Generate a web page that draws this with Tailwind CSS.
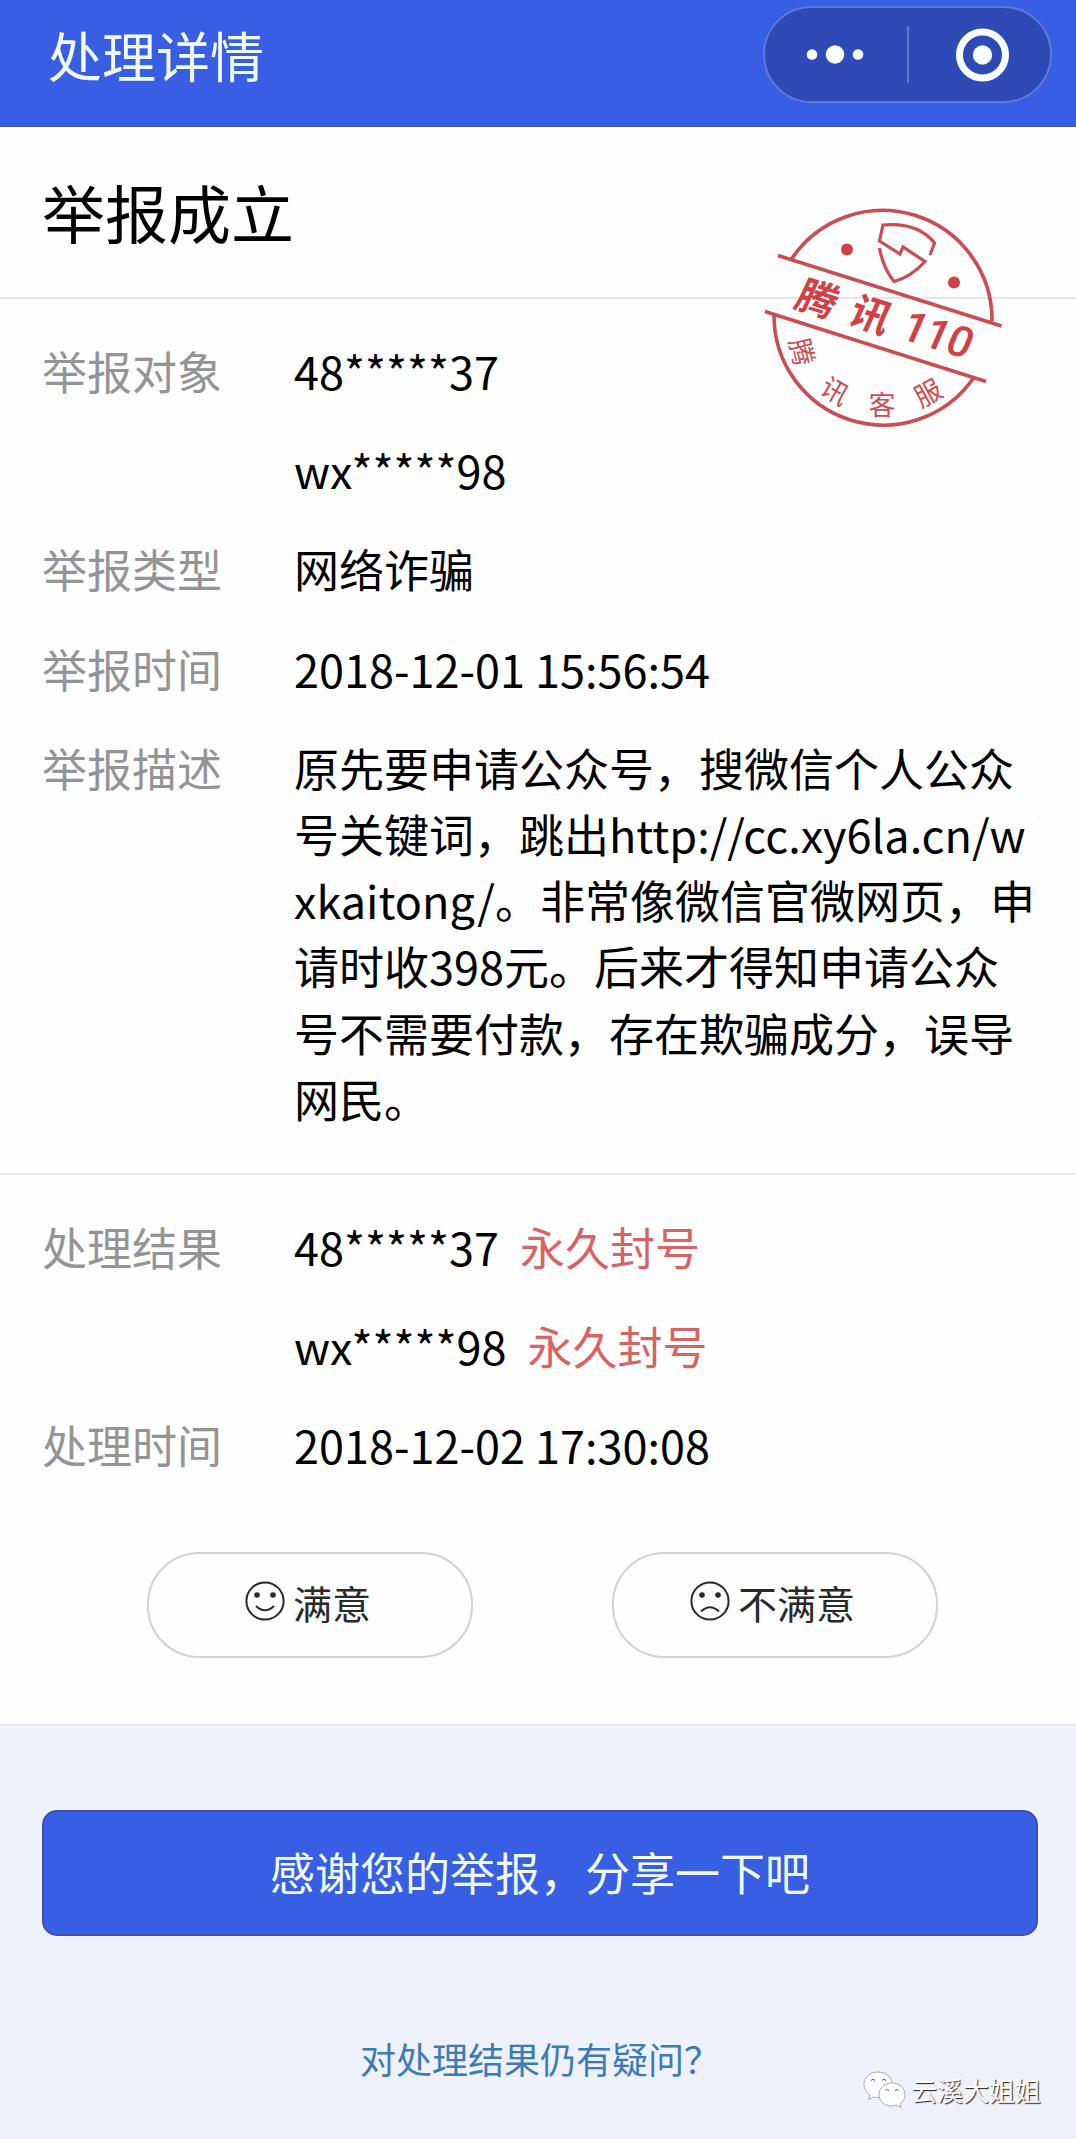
<!DOCTYPE html>
<html lang="zh-CN">
<head>
    <meta charset="UTF-8">
    <meta name="viewport" content="width=device-width, initial-scale=1.0">
    <title>处理详情</title>
    <script src="https://cdn.jsdelivr.net/npm/@tailwindcss/browser@4"></script>
    <style>
        body {
            font-family: 'Noto Sans CJK SC', sans-serif;
        }
    </style>
</head>
<body class="w-[1076px] h-[2139px] bg-[#eef0fa] overflow-hidden">
    <!-- Nav bar -->
    <header class="h-[127px] bg-[#385ee3] border-b border-[#4657b0] flex items-start justify-between pl-12 pr-6">
        <h1 class="text-[54px] leading-[80px] text-[#f0fbff] mt-[15px]">处理详情</h1>
        <div class="mt-[6px] w-[289px] h-[97px] rounded-full bg-[#2e4bb5] border-2 border-[#5f78dc]">
            <svg class="w-full h-full" viewBox="0 0 285 93" fill="#f8fdff">
                <circle cx="47" cy="46.5" r="5.3"/>
                <circle cx="70" cy="46.5" r="9.3"/>
                <circle cx="93" cy="46.5" r="5.3"/>
                <path d="M143 18V75" stroke="#5f78dc" stroke-width="2"/>
                <circle cx="217.5" cy="47" r="23" fill="none" stroke="#f8fdff" stroke-width="7"/>
                <circle cx="217.5" cy="47" r="9.7"/>
            </svg>
        </div>
    </header>

    <main class="relative h-[1598px] bg-[#fefefe] border-b border-[#e3e4ea]">
        <div class="h-[172px] border-b-2 border-[#e6e6ea] px-[42px] pt-[37px]">
            <h2 class="text-[63px] leading-[94px] text-black">举报成立</h2>
        </div>

        <!-- Report -->
        <section class="h-[876px] border-b-2 border-[#e8e8ec] pl-[42px] pt-[39px] text-[45px] leading-[66.2px] text-black">
            <dl class="grid grid-cols-[252px_1fr] gap-y-[33px]">
                <dt class="text-[#949496]">举报对象</dt>
                <dd>48*****37</dd>
                <dd class="col-start-2">wx*****98</dd>
                <dt class="text-[#949496]">举报类型</dt>
                <dd>网络诈骗</dd>
                <dt class="text-[#949496]">举报时间</dt>
                <dd>2018-12-01 15:56:54</dd>
                <dt class="text-[#949496]">举报描述</dt>
                <dd class="whitespace-nowrap">原先要申请公众号，搜微信个人公众<br>号关键词，跳出http://cc.xy6la.cn/w<br>xkaitong/。非常像微信官微网页，申<br>请时收398元。后来才得知申请公众<br>号不需要付款，存在欺骗成分，误导<br>网民。</dd>
            </dl>
        </section>

        <!-- Result -->
        <section class="pl-[42px] pt-[39px] text-[45px] leading-[66.2px] text-black">
            <dl class="grid grid-cols-[252px_1fr] gap-y-[33px]">
                <dt class="text-[#949496]">处理结果</dt>
                <dd class="flex gap-[21px]">48*****37<span class="text-[#da6263]">永久封号</span></dd>
                <dd class="col-start-2 flex gap-[21px]">wx*****98<span class="text-[#da6263]">永久封号</span></dd>
                <dt class="text-[#949496]">处理时间</dt>
                <dd>2018-12-02 17:30:08</dd>
            </dl>
        </section>

        <div class="flex gap-[139px] pl-[147px] mt-[73px]">
            <button class="w-[326px] h-[106px] rounded-[52px] border-2 border-[#d3d3d6] flex items-center pl-[96px] text-[39px] text-[#29292c]">
                <svg class="w-10 h-10 -mt-2 mr-2" viewBox="0 0 40 40" fill="none" stroke="#29292c" stroke-width="2">
                    <circle cx="20" cy="20" r="18.6"/>
                    <circle cx="12" cy="14" r="2.8" fill="#29292c" stroke="none"/>
                    <circle cx="28" cy="14" r="2.8" fill="#29292c" stroke="none"/>
                    <path d="M11 25Q20 33.500 29 25"/>
                </svg>
                <span class="-mt-1">满意</span>
            </button>
            <button class="w-[326px] h-[106px] rounded-[52px] border-2 border-[#d3d3d6] flex items-center pl-[76px] text-[39px] text-[#29292c]">
                <svg class="w-10 h-10 -mt-2 mr-2" viewBox="0 0 40 40" fill="none" stroke="#29292c" stroke-width="2">
                    <circle cx="20" cy="20" r="18.6"/>
                    <circle cx="12" cy="14" r="2.8" fill="#29292c" stroke="none"/>
                    <circle cx="28" cy="14" r="2.8" fill="#29292c" stroke="none"/>
                    <path d="M11 30.500Q20 22 29 30.500"/>
                </svg>
                <span class="-mt-1">不满意</span>
            </button>
        </div>

        <!-- Stamp -->
        <svg class="absolute left-[750px] top-[63px] w-[270px] h-[250px]" viewBox="0 0 270 250" fill="none" stroke="#cb4c51" stroke-width="3.6">
            <path d="M41.500 69A109.500 109.500 0 0 1 242 131M24 125A109.500 109.500 0 0 0 223.500 188M28 65.500L251.500 136M15 121.500L236 191.500"/>
            <path d="M180 65L184.500 53Q168 32 133 35L129.500 51L150 64L153 57L175 71.500Q161 87 144 91.500Q133 78 129.500 58" stroke-width="3.2"/>
            <g fill="#d23f44" stroke="none">
                <circle cx="97" cy="59.500" r="6"/>
                <circle cx="204" cy="92.500" r="6"/>
                <g font-weight="700" font-size="40" text-anchor="middle">
                    <text transform="translate(67.500 109) rotate(17.500) skewX(-7)" y="14.500">腾</text>
                    <text transform="translate(121 125) rotate(17.500) skewX(-7)" y="14.500">讯</text>
                    <text transform="translate(187.500 144.500) rotate(17.500) skewX(-6)" y="15" font-family="Roboto" font-weight="500" font-size="43" letter-spacing="-1">110</text>
                </g>
                <g font-size="27" fill="#cb4c51" text-anchor="middle">
                    <text transform="translate(52 162) rotate(76)" y="10">腾</text>
                    <text transform="translate(85 201) rotate(30)" y="10">讯</text>
                    <text transform="translate(132 215)" y="10">客</text>
                    <text transform="translate(178 203) rotate(-29)" y="10">服</text>
                </g>
            </g>
        </svg>
    </main>

    <footer class="relative pl-[42px] pr-[38px] pt-[85px] flex flex-col items-center">
        <button class="w-full h-[126px] rounded-[15px] bg-[#385ee3] border-2 border-[#3a4fae] pb-[3px] text-[45px] text-[#f0fbff]">感谢您的举报，分享一下吧</button>
        <a class="mt-[95px] text-[36px] leading-[54px] text-[#3c7ab8]">对处理结果仍有疑问？</a>

        <!-- Watermark -->
        <div class="absolute left-[863px] top-[346px] flex items-center gap-[5px]">
            <svg class="w-[43px] h-[38px]" viewBox="0 0 43 38" fill="#fff" stroke="#a9aab4" stroke-width="1">
                <path d="M15 1C7 1 1 6.500 1 13.500C1 18 3.500 21.500 7 24L5.500 28.500L10.500 26Q13 26.500 16 26.500L29 12C28 5 22 1 15 1Z"/>
                <path d="M28.500 12C21.500 12 16 17 16 23.500S21.500 35 28.500 35Q31 35 33 34L38 36.500L37 32.500C40 30.500 42 27.500 42 23.500C42 17 36 12 28.500 12Z"/>
                <path d="M8 9.500q2-2.500 4 0M19 9.500q2-2.500 4 0M22.500 19.500q2-2 3.500 0M32 19.500q2-2 3.500 0" fill="none" stroke="#55565e"/>
            </svg>
            <span class="text-[26px] leading-[38px] text-white [text-shadow:1px_1px_1px_#222]">云溪大姐姐</span>
        </div>
    </footer>
</body>
</html>
